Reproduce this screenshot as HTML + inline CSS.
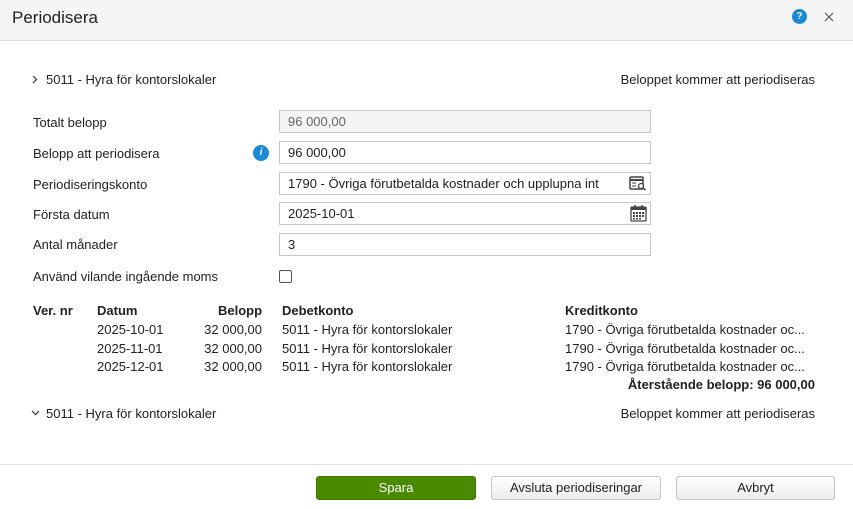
<!DOCTYPE html>
<html><head><meta charset="utf-8"><style>
*{box-sizing:border-box;margin:0;padding:0}
body{width:853px;height:509px;background:#fff;font-family:"Liberation Sans",sans-serif;font-size:13px;color:#222;position:relative;overflow:hidden}
.a{position:absolute;white-space:nowrap}
.hdr{position:absolute;left:0;top:0;width:853px;height:41px;background:#f5f5f5;border-bottom:1px solid #ddd}
.inp{position:absolute;left:279px;width:372px;height:23px;border:1px solid #c8c8c8;background:#fff;padding:3px 8px;font-size:13px}
.btn{position:absolute;top:476px;height:24px;border:1px solid #c5c5c5;border-radius:3px;background:linear-gradient(#fff,#ececec);text-align:center;line-height:22px;font-size:13px}
</style></head><body>
<div class="hdr"></div>
<div class="a" style="left:12px;top:8px;font-size:17px;color:#222">Periodisera</div>
<div class="a" style="left:792px;top:9px;width:15px;height:15px;border-radius:50%;background:#1a8ad8;color:#fff;font-size:10px;font-weight:bold;text-align:center;line-height:15px">?</div>
<svg class="a" style="left:824px;top:12px" width="10" height="10" viewBox="0 0 10 10"><path d="M1 1L9 9M9 1L1 9" stroke="#555" stroke-width="1.2"/></svg>

<svg class="a" style="left:32px;top:75px" width="6" height="9" viewBox="0 0 6 9"><path d="M1 1L4.5 4.5L1 8" fill="none" stroke="#333" stroke-width="1.2"/></svg>
<div class="a" style="left:46px;top:72px">5011 - Hyra för kontorslokaler</div>
<div class="a" style="right:38px;top:72px">Beloppet kommer att periodiseras</div>

<div class="a" style="left:33px;top:115px">Totalt belopp</div>
<div class="a" style="left:33px;top:146px">Belopp att periodisera</div>
<div class="a" style="left:33px;top:177px">Periodiseringskonto</div>
<div class="a" style="left:33px;top:207px">Första datum</div>
<div class="a" style="left:33px;top:237px">Antal månader</div>
<div class="a" style="left:33px;top:269px">Använd vilande ingående moms</div>

<div class="inp" style="top:110px;background:#f4f4f4;color:#666">96 000,00</div>
<div class="a" style="left:253px;top:145px;width:16px;height:16px;border-radius:50%;background:#1a8ad8;color:#fff;font-size:10px;font-weight:bold;font-style:italic;text-align:center;line-height:16px">i</div>
<div class="inp" style="top:141px">96 000,00</div>
<div class="inp" style="top:172px">1790 - Övriga förutbetalda kostnader och upplupna int</div>
<svg class="a" style="left:629px;top:176px" width="18" height="15" viewBox="0 0 18 15"><rect x="1" y="1" width="13" height="12" rx="1" fill="none" stroke="#444" stroke-width="1.5"/><line x1="1" y1="4" x2="14" y2="4" stroke="#444" stroke-width="2"/><line x1="3" y1="7" x2="7" y2="7" stroke="#444"/><line x1="3" y1="10" x2="7" y2="10" stroke="#444"/><circle cx="12" cy="10" r="2.5" fill="#fff" stroke="#444" stroke-width="1.3"/><line x1="14" y1="12" x2="16.5" y2="14" stroke="#444" stroke-width="1.5"/></svg>
<div class="inp" style="top:202px">2025-10-01</div>
<svg class="a" style="left:630px;top:204px" width="17" height="18" viewBox="0 0 17 18"><rect x="1" y="3" width="15" height="14" rx="1" fill="none" stroke="#444" stroke-width="1.3"/><rect x="1" y="3" width="15" height="3" fill="#444"/><line x1="5" y1="1" x2="5" y2="4" stroke="#444" stroke-width="1.5"/><line x1="12" y1="1" x2="12" y2="4" stroke="#444" stroke-width="1.5"/><g fill="#444"><rect x="3" y="8" width="2" height="2"/><rect x="6" y="8" width="2" height="2"/><rect x="9" y="8" width="2" height="2"/><rect x="12" y="8" width="2" height="2"/><rect x="3" y="11" width="2" height="2"/><rect x="6" y="11" width="2" height="2"/><rect x="9" y="11" width="2" height="2"/><rect x="12" y="11" width="2" height="2"/><rect x="3" y="14" width="2" height="1.5"/><rect x="6" y="14" width="2" height="1.5"/><rect x="9" y="14" width="2" height="1.5"/></g></svg>
<div class="inp" style="top:233px">3</div>
<div class="a" style="left:279px;top:270px;width:13px;height:13px;border:1px solid #555;border-radius:2px"></div>

<div class="a" style="left:33px;top:303px;font-weight:bold">Ver. nr</div>
<div class="a" style="left:97px;top:303px;font-weight:bold">Datum</div>
<div class="a" style="left:218px;top:303px;font-weight:bold">Belopp</div>
<div class="a" style="left:282px;top:303px;font-weight:bold">Debetkonto</div>
<div class="a" style="left:565px;top:303px;font-weight:bold">Kreditkonto</div>

<div class="a" style="left:97px;top:322px">2025-10-01</div><div class="a" style="right:591px;top:322px">32 000,00</div><div class="a" style="left:282px;top:322px">5011 - Hyra för kontorslokaler</div><div class="a" style="left:565px;top:322px">1790 - Övriga förutbetalda kostnader oc...</div>
<div class="a" style="left:97px;top:341px">2025-11-01</div><div class="a" style="right:591px;top:341px">32 000,00</div><div class="a" style="left:282px;top:341px">5011 - Hyra för kontorslokaler</div><div class="a" style="left:565px;top:341px">1790 - Övriga förutbetalda kostnader oc...</div>
<div class="a" style="left:97px;top:359px">2025-12-01</div><div class="a" style="right:591px;top:359px">32 000,00</div><div class="a" style="left:282px;top:359px">5011 - Hyra för kontorslokaler</div><div class="a" style="left:565px;top:359px">1790 - Övriga förutbetalda kostnader oc...</div>
<div class="a" style="right:38px;top:377px;font-weight:bold">Återstående belopp: 96 000,00</div>

<svg class="a" style="left:31px;top:410px" width="9" height="6" viewBox="0 0 9 6"><path d="M1 1L4.5 4.5L8 1" fill="none" stroke="#333" stroke-width="1.2"/></svg>
<div class="a" style="left:46px;top:406px">5011 - Hyra för kontorslokaler</div>
<div class="a" style="right:38px;top:406px">Beloppet kommer att periodiseras</div>

<div class="a" style="left:0;top:464px;width:853px;height:1px;background:#e0e0e0"></div>
<div class="btn" style="left:316px;width:160px;background:#4a8a00;border-color:#3f7a00;color:#fff">Spara</div>
<div class="btn" style="left:491px;width:170px">Avsluta periodiseringar</div>
<div class="btn" style="left:676px;width:159px">Avbryt</div>
</body></html>
